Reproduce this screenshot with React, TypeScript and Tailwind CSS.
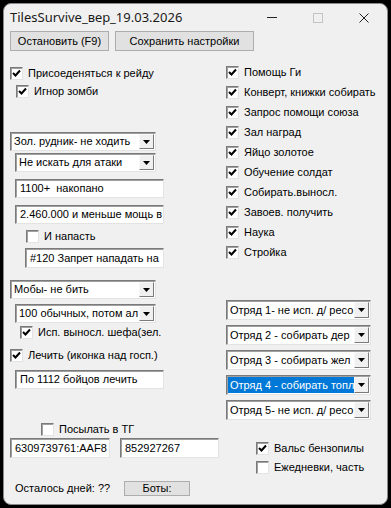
import React from 'react';

const font = { fontFamily: '"Liberation Sans", Arial, sans-serif' };

const Check = ({ checked }: { checked: boolean }) => (
  <div className="w-[13px] h-[13px] shrink-0 bg-white border border-t-[#7a7a7a] border-l-[#7a7a7a] border-r-[#e3e3e3] border-b-[#e3e3e3] shadow-[inset_1px_1px_0_#a0a0a0] flex items-center justify-center">
    {checked && (
      <svg width="9" height="9" viewBox="0 0 9 9">
        <path d="M1 4 L3.5 6.5 L8 1.5" fill="none" stroke="#000" strokeWidth="2" />
      </svg>
    )}
  </div>
);

const CheckRow = ({ label, checked, className = '' }: { label: string; checked: boolean; className?: string }) => (
  <div className={`flex items-center h-[14px] gap-[5px] ${className}`}>
    <Check checked={checked} />
    <span className="whitespace-nowrap">{label}</span>
  </div>
);

const TextBox = ({ value, className = '' }: { value: string; className?: string }) => (
  <div className={`bg-white border border-t-[#7a7a7a] border-l-[#7a7a7a] border-r-[#e3e3e3] border-b-[#e3e3e3] shadow-[inset_1px_1px_0_#a0a0a0] flex items-center pl-[4px] overflow-hidden whitespace-pre ${className}`}>
    {value}
  </div>
);

const Combo = ({ value, selected = false, className = '' }: { value: string; selected?: boolean; className?: string }) => (
  <div className={`bg-white border border-t-[#7a7a7a] border-l-[#7a7a7a] border-r-[#e3e3e3] border-b-[#e3e3e3] shadow-[inset_1px_1px_0_#a0a0a0] flex items-stretch p-[1px] ${className}`}>
    <div className={`flex-1 flex items-center pl-[2px] overflow-hidden whitespace-nowrap ${selected ? 'bg-[#0078d7] text-white' : ''}`}>
      {value}
    </div>
    <div className="w-[15px] shrink-0 bg-[#f0f0f0] border border-t-[#f8f8f8] border-l-[#f8f8f8] border-r-[#7a7a7a] border-b-[#7a7a7a] flex items-center justify-center">
      <svg width="7" height="4" viewBox="0 0 7 4">
        <path d="M0 0 H7 L3.5 4 Z" fill="#000" />
      </svg>
    </div>
  </div>
);

export default function App() {
  const rightChecks = [
    'Помощь Ги',
    'Конверт, книжки собирать',
    'Запрос помощи союза',
    'Зал наград',
    'Яйцо золотое',
    'Обучение солдат',
    'Собирать.выносл.',
    'Завоев. получить',
    'Наука',
    'Стройка',
  ];
  const squads = [
    'Отряд 1- не исп. д/ ресо',
    'Отряд 2 - собирать дер',
    'Отряд 3 - собирать жел',
    'Отряд 4 - собирать топл',
    'Отряд 5- не исп. д/ ресо',
  ];

  return (
    <div className="w-[391px] h-[508px] bg-black p-[3px]" style={font}>
      <div className="w-[385px] h-[502px] bg-[#f0f0f0] rounded-[8px] border border-[#8a8a8a] overflow-hidden text-[11px] text-black flex flex-col">
        {/* title bar */}
        <div className="h-[27px] flex items-center shrink-0">
          <span className="pl-[6px] text-[13px] text-[#1a1a1a]" style={{ fontFamily: '"Noto Sans", sans-serif' }}>
            TilesSurvive_вер_19.03.2026
          </span>
          <div className="ml-auto flex items-center">
            <div className="w-[46px] flex justify-center">
              <div className="w-[10px] h-px bg-[#222]" />
            </div>
            <div className="w-[46px] flex justify-center">
              <div className="w-[10px] h-[10px] border border-[#c4c4c4]" />
            </div>
            <div className="w-[46px] flex justify-center">
              <svg width="10" height="10" viewBox="0 0 10 10">
                <path d="M0.5 0.5 L9.5 9.5 M9.5 0.5 L0.5 9.5" stroke="#222" strokeWidth="1" />
              </svg>
            </div>
          </div>
        </div>

        {/* top buttons */}
        <div className="flex gap-[6px] pl-[6px]">
          <button className="w-[99px] h-[20px] bg-[#e1e1e1] border border-[#adadad]">Остановить (F9)</button>
          <button className="w-[139px] h-[20px] bg-[#e1e1e1] border border-[#adadad]">Сохранить настройки</button>
        </div>

        <div className="flex">
          {/* left column */}
          <div className="w-[222px] pl-[6px] flex flex-col items-start">
            <CheckRow className="mt-[15px]" checked label="Присоеденяться к рейду" />
            <CheckRow className="mt-[4px] ml-[6px]" checked label="Игнор зомби" />
            <Combo className="mt-[34px] w-[146px] h-[19px]" value="Зол. рудник- не ходить" />
            <Combo className="mt-[2px] ml-[5px] w-[141px] h-[19px]" value="Не искать для атаки" />
            <TextBox className="mt-[7px] ml-[5px] w-[149px] h-[19px]" value="1100+  накопано" />
            <TextBox className="mt-[7px] ml-[5px] w-[149px] h-[19px]" value="2.460.000 и меньше мощь в" />
            <CheckRow className="mt-[5px] ml-[16px]" checked={false} label="И напасть" />
            <TextBox className="mt-[5px] ml-[15px] w-[139px] h-[20px]" value="#120 Запрет нападать на" />
            <Combo className="mt-[12px] w-[146px] h-[19px]" value="Мобы- не бить" />
            <Combo className="mt-[5px] ml-[5px] w-[141px] h-[19px]" value="100 обычных, потом ал" />
            <CheckRow className="mt-[2px] ml-[10px]" checked label="Исп. выносл. шефа(зел." />
            <CheckRow className="mt-[9px]" checked label="Лечить (иконка над госп.)" />
            <TextBox className="mt-[8px] ml-[5px] w-[149px] h-[19px]" value="По 1112 бойцов лечить" />
            <CheckRow className="mt-[33px] ml-[31px]" checked={false} label="Посылать в ТГ" />
            <div className="mt-[2px] flex gap-[10px]">
              <TextBox className="w-[100px] h-[20px]" value="6309739761:AAF8" />
              <TextBox className="w-[99px] h-[20px]" value="852927267" />
            </div>
            <div className="mt-[22px] flex items-center">
              <span className="w-[114px] pl-[5px] whitespace-nowrap">Осталось дней: ??</span>
              <button className="w-[66px] h-[15px] bg-[#e1e1e1] border border-[#adadad] leading-[12px]">Боты:</button>
            </div>
          </div>

          {/* right column */}
          <div className="flex flex-col items-start">
            <div className="mt-[11px] flex flex-col">
              {rightChecks.map((t) => (
                <div key={t} className="h-[20px] flex items-center">
                  <CheckRow checked label={t} />
                </div>
              ))}
            </div>
            <div className="mt-[38px] flex flex-col gap-[5px]">
              {squads.map((s, i) => (
                <Combo key={s} className="w-[145px] h-[20px]" value={s} selected={i === 3} />
              ))}
            </div>
            <CheckRow className="mt-[21px] ml-[30px]" checked label="Вальс бензопилы" />
            <CheckRow className="mt-[5px] ml-[30px]" checked={false} label="Ежедневки, часть" />
          </div>
        </div>
      </div>
    </div>
  );
}
